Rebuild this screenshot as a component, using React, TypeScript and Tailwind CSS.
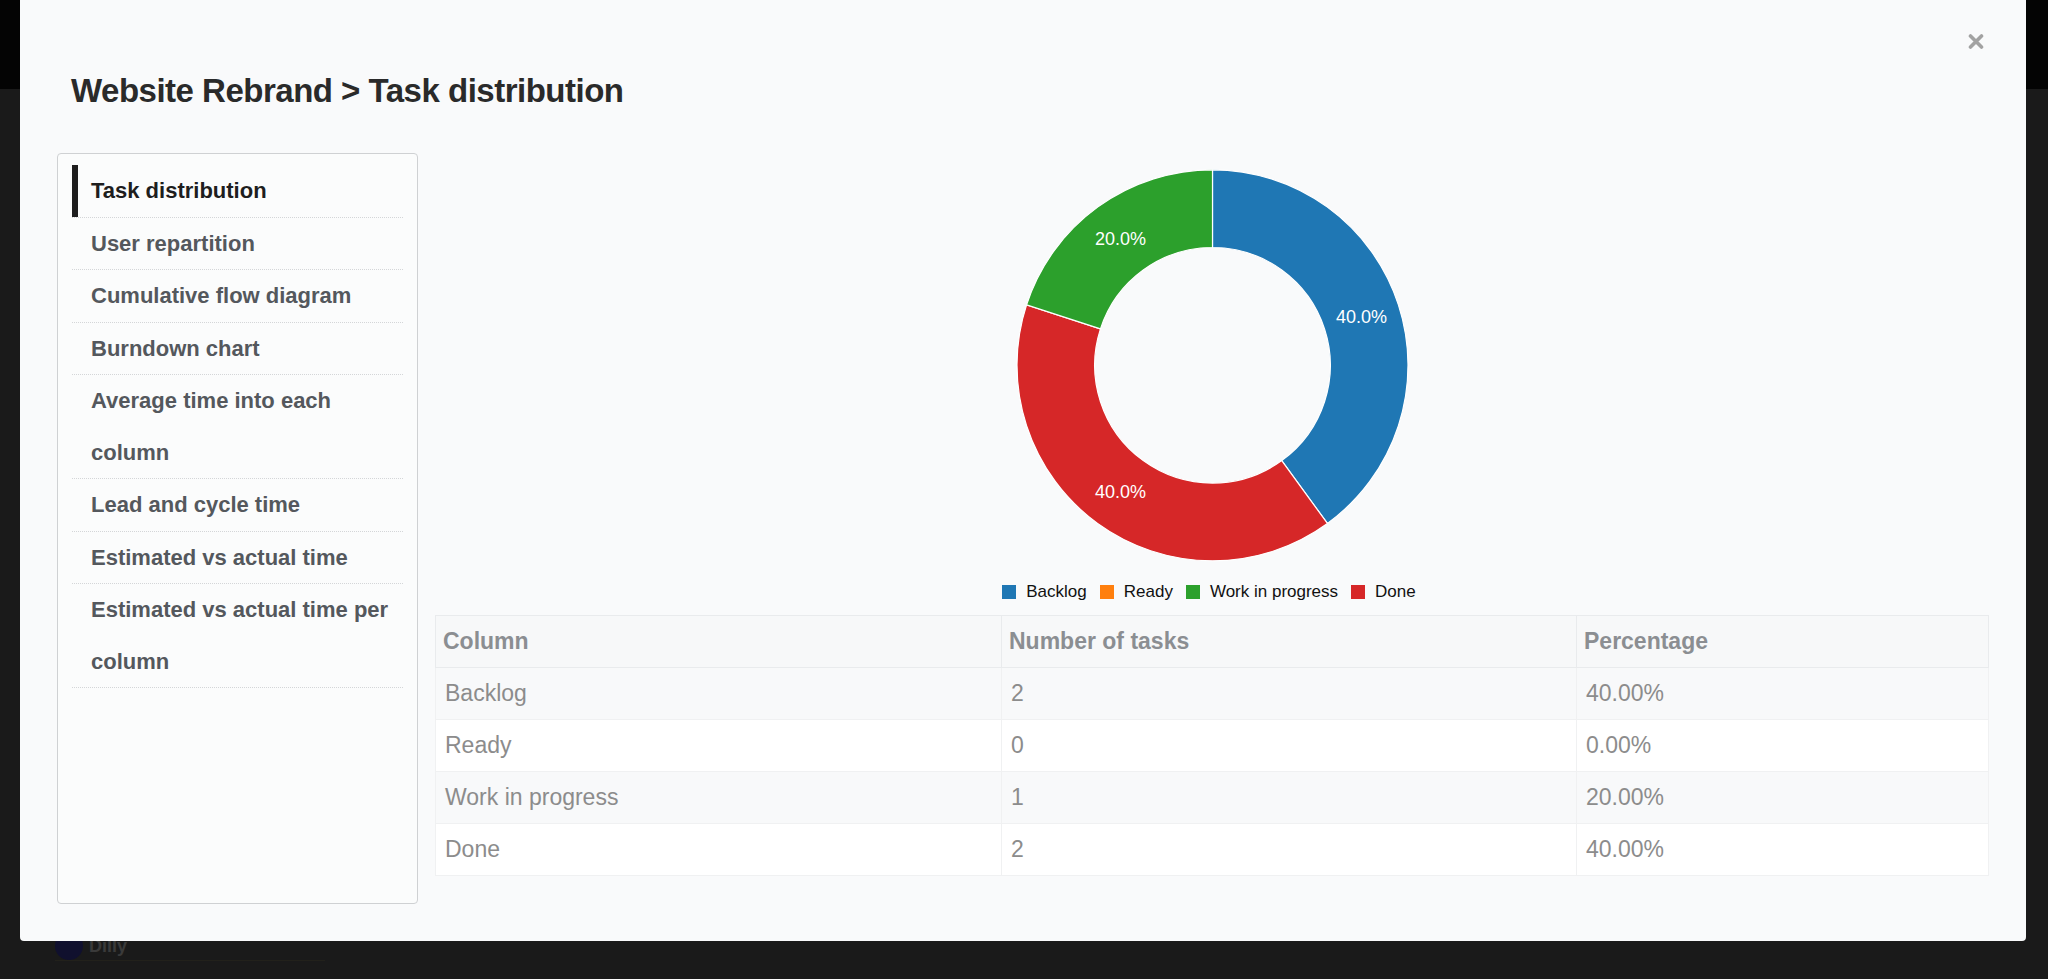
import React from "react";

const CX = 214.5;
const CY = 212.3;
const R = 195.5;
const RI = 117.8;

function pt(angle: number, rad: number): [number, number] {
  const a = (angle * Math.PI) / 180;
  return [CX + rad * Math.sin(a), CY - rad * Math.cos(a)];
}

function arc(a0: number, a1: number): string {
  const [x0, y0] = pt(a0, R);
  const [x1, y1] = pt(a1, R);
  const [x2, y2] = pt(a1, RI);
  const [x3, y3] = pt(a0, RI);
  const large = a1 - a0 > 180 ? 1 : 0;
  return `M${x0},${y0} A${R},${R} 0 ${large} 1 ${x1},${y1} L${x2},${y2} A${RI},${RI} 0 ${large} 0 ${x3},${y3} Z`;
}

const segments = [
  { color: "#1f77b4", a0: 0, a1: 144, label: "40.0%" },
  { color: "#d62728", a0: 144, a1: 288, label: "40.0%" },
  { color: "#2ca02c", a0: 288, a1: 360, label: "20.0%" },
];

const legend = [
  { color: "#1f77b4", label: "Backlog" },
  { color: "#ff7f0e", label: "Ready" },
  { color: "#2ca02c", label: "Work in progress" },
  { color: "#d62728", label: "Done" },
];

const menu = [
  "Task distribution",
  "User repartition",
  "Cumulative flow diagram",
  "Burndown chart",
  "Average time into each column",
  "Lead and cycle time",
  "Estimated vs actual time",
  "Estimated vs actual time per column",
];

const rows = [
  { name: "Backlog", n: "2", p: "40.00%" },
  { name: "Ready", n: "0", p: "0.00%" },
  { name: "Work in progress", n: "1", p: "20.00%" },
  { name: "Done", n: "2", p: "40.00%" },
];

function Donut() {
  const mid = (R + RI) / 2;
  return (
    <svg width="429" height="429" viewBox="0 0 429 429">
      {segments.map((s, i) => (
        <path key={i} d={arc(s.a0, s.a1)} fill={s.color} stroke="#ffffff" strokeWidth="1.2" />
      ))}
      {segments.map((s, i) => {
        const [x, y] = pt((s.a0 + s.a1) / 2, mid);
        return (
          <text
            key={"t" + i}
            x={x}
            y={y}
            fill="#ffffff"
            fontSize="18"
            textAnchor="middle"
            dominantBaseline="central"
            fontFamily="'Liberation Sans', Arial, sans-serif"
          >
            {s.label}
          </text>
        );
      })}
    </svg>
  );
}

export default function App() {
  return (
    <div className="relative w-[2048px] h-[979px] overflow-hidden bg-[#1a1a1a] [font-family:'Liberation_Sans',Arial,sans-serif]">
      {/* background application */}
      <div className="flex flex-col h-full">
        <div className="h-[89px] bg-[#040404]" />
        <div className="flex-1 flex flex-col justify-end pb-[18px] pl-[55px]">
          <div className="w-[270px] flex items-center gap-[6px] border-b border-[#22211b]">
            <div className="w-[28px] h-[28px] rounded-full bg-[#10102e]" />
            <span className="text-[18px] font-bold text-[#3a3a3a]">Dilly</span>
          </div>
        </div>
      </div>

      {/* modal */}
      <div className="absolute left-[20px] top-0 w-[2006px] h-[941px] bg-[#f9fafb] rounded-b-[4px] px-[37px] pt-[71px]">
        <button className="absolute top-[33px] right-[42px] w-[16px] h-[17px] flex items-center justify-center">
          <svg width="16" height="17" viewBox="0 0 16 17">
            <path d="M2.5 3 L13.5 14 M13.5 3 L2.5 14" stroke="#a2a2a2" strokeWidth="3.6" strokeLinecap="round" />
          </svg>
        </button>

        <h1 className="ml-[14px] text-[33px] leading-[40px] font-bold tracking-[-0.5px] text-[#2a2a2a]">
          Website Rebrand &gt; Task distribution
        </h1>

        <div className="mt-[42px] flex gap-[17px]">
          {/* sidebar */}
          <div className="w-[361px] h-[751px] shrink-0 border border-[#cfd1d3] rounded-[4px] bg-[#fbfcfc] pt-[11px] px-[14px]">
            <ul>
              {menu.map((m, i) => (
                <li
                  key={m}
                  className={
                    i === 0
                      ? "pl-[19px] pr-[4px] text-[22px] leading-[51.5px] font-bold text-[#1e1e1e] border-b border-dotted border-[#d4d6d8] shadow-[inset_6px_0_0_#1e1e1e]"
                      : "pl-[19px] pr-[4px] text-[22px] leading-[51.5px] font-bold text-[#54585d] border-b border-dotted border-[#d4d6d8]"
                  }
                >
                  {m}
                </li>
              ))}
            </ul>
          </div>

          {/* content */}
          <div className="flex-1 flex flex-col">
            <div className="flex justify-center h-[429px]">
              <Donut />
            </div>
            <div className="h-[20px] flex items-center justify-center gap-[13px] pr-[6px]">
              {legend.map((l) => (
                <div key={l.label} className="flex items-center gap-[10px]">
                  <span className="w-[14px] h-[14px]" style={{ backgroundColor: l.color }} />
                  <span className="text-[17px] text-[#111111]">{l.label}</span>
                </div>
              ))}
            </div>
            <table className="mt-[13px] w-full border-collapse table-fixed">
              <colgroup>
                <col className="w-[566px]" />
                <col className="w-[575px]" />
                <col />
              </colgroup>
              <thead>
                <tr className="bg-[#f7f8f9]">
                  <th className="h-[52px] pl-[7px] text-left text-[23px] font-bold text-[#8b8e92] border border-[#e9ebed]">Column</th>
                  <th className="h-[52px] pl-[7px] text-left text-[23px] font-bold text-[#8b8e92] border border-[#e9ebed]">Number of tasks</th>
                  <th className="h-[52px] pl-[7px] text-left text-[23px] font-bold text-[#8b8e92] border border-[#e9ebed]">Percentage</th>
                </tr>
              </thead>
              <tbody>
                {rows.map((r, i) => (
                  <tr key={r.name} className={i % 2 === 0 ? "bg-[#f8f9fa]" : "bg-[#ffffff]"}>
                    <td className="h-[52px] pl-[9px] text-[23px] text-[#8c8c8c] border border-[#f0f1f2]">{r.name}</td>
                    <td className="h-[52px] pl-[9px] text-[23px] text-[#8c8c8c] border border-[#f0f1f2]">{r.n}</td>
                    <td className="h-[52px] pl-[9px] text-[23px] text-[#8c8c8c] border border-[#f0f1f2]">{r.p}</td>
                  </tr>
                ))}
              </tbody>
            </table>
          </div>
        </div>
      </div>
    </div>
  );
}
